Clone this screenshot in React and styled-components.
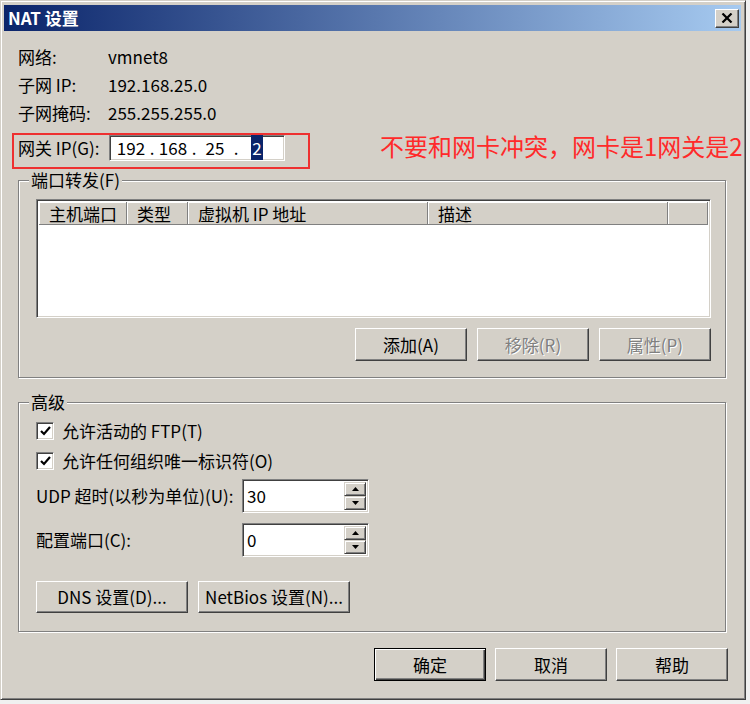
import styled, { createGlobalStyle } from "styled-components";

const GlobalStyle = createGlobalStyle`
  html, body {
    margin: 0;
    padding: 0;
    background: #f0f0f0;
  }
  body {
    font-family: "Noto Sans CJK SC", "Liberation Sans", sans-serif;
    font-size: 17px;
    color: #000;
  }
`;

const Window = styled.div`
  width: 746px;
  height: 700px;
  box-sizing: border-box;
  background: #d4d0c8;
  border: 1px solid;
  border-color: #d4d0c8 #404040 #404040 #d4d0c8;
  box-shadow: inset 1px 1px 0 #fff, inset -1px -1px 0 #808080;
  padding: 4px 4px 4px 3px;
  display: flex;
  flex-direction: column;
`;

const TitleBar = styled.div`
  height: 26px;
  display: flex;
  align-items: center;
  justify-content: space-between;
  padding: 0 2px 0 4px;
  background: linear-gradient(to right, #0a246a, #a6caf0);
`;

const Title = styled.span`
  color: #fff;
  font-weight: bold;
  line-height: 20px;
`;

const CloseButton = styled.div`
  width: 24px;
  height: 19px;
  box-sizing: border-box;
  background: #d4d0c8;
  border: 1px solid;
  border-color: #fff #404040 #404040 #fff;
  box-shadow: inset -1px -1px 0 #808080;
  display: flex;
  align-items: center;
  justify-content: center;
`;

const Content = styled.div`
  padding: 12px 13px 0 14px;
  display: flex;
  flex-direction: column;
`;

const InfoRow = styled.div`
  display: flex;
  align-items: center;
  height: 28px;
`;

const Label = styled.span`
  width: ${(p) => p.$w || 90}px;
  flex: none;
  line-height: 20px;
  white-space: nowrap;
`;

const Value = styled.span`
  line-height: 20px;
`;

const GatewayLine = styled.div`
  display: flex;
  align-items: flex-start;
  margin-top: 6px;
`;

const RedBox = styled.div`
  display: flex;
  align-items: center;
  flex: none;
  border: 2px solid #ee3030;
  margin-left: -6px;
  padding: 0 23px 6px 4px;
`;

const Sunken = styled.div`
  box-sizing: border-box;
  background: #fff;
  border: 1px solid;
  border-color: #808080 #fff #fff #808080;
  box-shadow: inset 1px 1px 0 #404040, inset -1px -1px 0 #d4d0c8;
`;

const IpInput = styled(Sunken)`
  width: 176px;
  height: 26px;
  display: flex;
  align-items: center;
  padding-left: 5px;
`;

const IpField = styled.span`
  width: 32px;
  text-align: center;
  line-height: 20px;
`;

const IpDot = styled.span`
  width: 10px;
  text-align: center;
  line-height: 20px;
`;

const Selected = styled.span`
  background: #0a246a;
  color: #fff;
  padding: 0 1px;
`;

const Note = styled.span`
  flex: none;
  margin-left: 70px;
  color: #ff2a2a;
  font-size: 24px;
  line-height: 26px;
  white-space: nowrap;
`;

const Group = styled.fieldset`
  margin: ${(p) => p.$top || 0}px 2px 0 0;
  padding: 9px 14px ${(p) => p.$bottom || 16}px 17px;
  border: 1px solid #808080;
  box-shadow: 1px 1px 0 #fff, inset 1px 1px 0 #fff;
  min-width: 0;
`;

const Legend = styled.legend`
  margin-left: -7px;
  padding: 0 2px;
  line-height: 20px;
  background: #d4d0c8;
`;

const ListView = styled(Sunken)`
  height: 119px;
  padding: 2px;
`;

const ListHeader = styled.div`
  display: flex;
  height: 23px;
  background: #d4d0c8;
`;

const HeaderCell = styled.div`
  box-sizing: border-box;
  width: ${(p) => (p.$w ? `${p.$w}px` : "auto")};
  flex: ${(p) => (p.$w ? "none" : 1)};
  padding-left: 10px;
  line-height: 23px;
  box-shadow: inset -1px -1px 0 #808080, inset 1px 1px 0 #fff;
`;

const ButtonRow = styled.div`
  display: flex;
  justify-content: ${(p) => p.$justify || "flex-end"};
  gap: ${(p) => p.$gap || 10}px;
  margin-top: ${(p) => p.$top || 0}px;
`;

const Button = styled.button`
  width: ${(p) => p.$w || 112}px;
  height: ${(p) => p.$h || 33}px;
  box-sizing: border-box;
  padding: 0;
  font: inherit;
  line-height: 20px;
  color: #000;
  background: #d4d0c8;
  border: 1px solid;
  border-color: ${(p) =>
    p.$default ? "#000" : "#fff #404040 #404040 #fff"};
  box-shadow: ${(p) =>
    p.$default
      ? "inset 1px 1px 0 #fff, inset -1px -1px 0 #404040, inset -2px -2px 0 #808080"
      : "inset -1px -1px 0 #808080"};
  &:disabled {
    color: #808080;
    text-shadow: 1px 1px 0 #fff;
  }
`;

const CheckRow = styled.label`
  display: flex;
  align-items: center;
  gap: 8px;
  height: 20px;
  margin-top: ${(p) => p.$top || 0}px;
  line-height: 20px;
`;

const CheckBox = styled(Sunken)`
  width: 18px;
  height: 18px;
  display: flex;
  align-items: center;
  justify-content: center;
`;

const SpinRow = styled.div`
  display: flex;
  align-items: center;
  margin-top: ${(p) => p.$top || 0}px;
`;

const SpinBox = styled(Sunken)`
  width: 127px;
  height: 34px;
  display: flex;
  padding: 2px 2px 2px 0;
`;

const SpinValue = styled.span`
  flex: 1;
  padding-left: 4px;
  line-height: 28px;
`;

const SpinArrows = styled.div`
  width: 22px;
  display: flex;
  flex-direction: column;
`;

const ArrowButton = styled.div`
  flex: 1;
  box-sizing: border-box;
  background: #d4d0c8;
  border: 1px solid;
  border-color: #d4d0c8 #404040 #404040 #d4d0c8;
  box-shadow: inset 1px 1px 0 #fff, inset -1px -1px 0 #808080;
  display: flex;
  align-items: center;
  justify-content: center;
`;

function Check() {
  return (
    <svg width="11" height="10" viewBox="0 0 11 10">
      <path d="M1 5 L4 8 L10 1" fill="none" stroke="#000" strokeWidth="2.2" />
    </svg>
  );
}

function Arrow({ up }) {
  return (
    <svg width="7" height="4" viewBox="0 0 7 4">
      <path d={up ? "M3.5 0 L7 4 L0 4 Z" : "M0 0 L7 0 L3.5 4 Z"} fill="#000" />
    </svg>
  );
}

function Spinner({ value }) {
  return (
    <SpinBox>
      <SpinValue>{value}</SpinValue>
      <SpinArrows>
        <ArrowButton>
          <Arrow up />
        </ArrowButton>
        <ArrowButton>
          <Arrow />
        </ArrowButton>
      </SpinArrows>
    </SpinBox>
  );
}

export default function App() {
  return (
    <>
      <GlobalStyle />
      <Window>
        <TitleBar>
          <Title>NAT 设置</Title>
          <CloseButton>
            <svg width="12" height="10" viewBox="0 0 12 10">
              <path d="M1.5 0.5 L10.5 9.5 M10.5 0.5 L1.5 9.5" stroke="#000" strokeWidth="2.2" />
            </svg>
          </CloseButton>
        </TitleBar>
        <Content>
          <InfoRow>
            <Label>网络:</Label>
            <Value>vmnet8</Value>
          </InfoRow>
          <InfoRow>
            <Label>子网 IP:</Label>
            <Value>192.168.25.0</Value>
          </InfoRow>
          <InfoRow>
            <Label>子网掩码:</Label>
            <Value>255.255.255.0</Value>
          </InfoRow>

          <GatewayLine>
            <RedBox>
              <Label $w={91}>网关 IP(G):</Label>
              <IpInput>
                <IpField>192</IpField>
                <IpDot>.</IpDot>
                <IpField>168</IpField>
                <IpDot>.</IpDot>
                <IpField>25</IpField>
                <IpDot>.</IpDot>
                <IpField>
                  <Selected>2</Selected>
                </IpField>
              </IpInput>
            </RedBox>
            <Note>不要和网卡冲突，网卡是1网关是2</Note>
          </GatewayLine>

          <Group $top={1}>
            <Legend>端口转发(F)</Legend>
            <ListView>
              <ListHeader>
                <HeaderCell $w={88}>主机端口</HeaderCell>
                <HeaderCell $w={61}>类型</HeaderCell>
                <HeaderCell $w={240}>虚拟机 IP 地址</HeaderCell>
                <HeaderCell $w={240}>描述</HeaderCell>
                <HeaderCell />
              </ListHeader>
            </ListView>
            <ButtonRow $top={10}>
              <Button>添加(A)</Button>
              <Button disabled>移除(R)</Button>
              <Button disabled>属性(P)</Button>
            </ButtonRow>
          </Group>

          <Group $top={14} $bottom={18}>
            <Legend>高级</Legend>
            <CheckRow>
              <CheckBox>
                <Check />
              </CheckBox>
              允许活动的 FTP(T)
            </CheckRow>
            <CheckRow $top={10}>
              <CheckBox>
                <Check />
              </CheckBox>
              允许任何组织唯一标识符(O)
            </CheckRow>
            <SpinRow $top={8}>
              <Label $w={206}>UDP 超时(以秒为单位)(U):</Label>
              <Spinner value="30" />
            </SpinRow>
            <SpinRow $top={10}>
              <Label $w={206}>配置端口(C):</Label>
              <Spinner value="0" />
            </SpinRow>
            <ButtonRow $justify="flex-start" $top={24}>
              <Button $w={152} $h={32}>DNS 设置(D)...</Button>
              <Button $w={152} $h={32}>NetBios 设置(N)...</Button>
            </ButtonRow>
          </Group>

          <ButtonRow $gap={9} $top={16}>
            <Button $default>确定</Button>
            <Button>取消</Button>
            <Button>帮助</Button>
          </ButtonRow>
        </Content>
      </Window>
    </>
  );
}
